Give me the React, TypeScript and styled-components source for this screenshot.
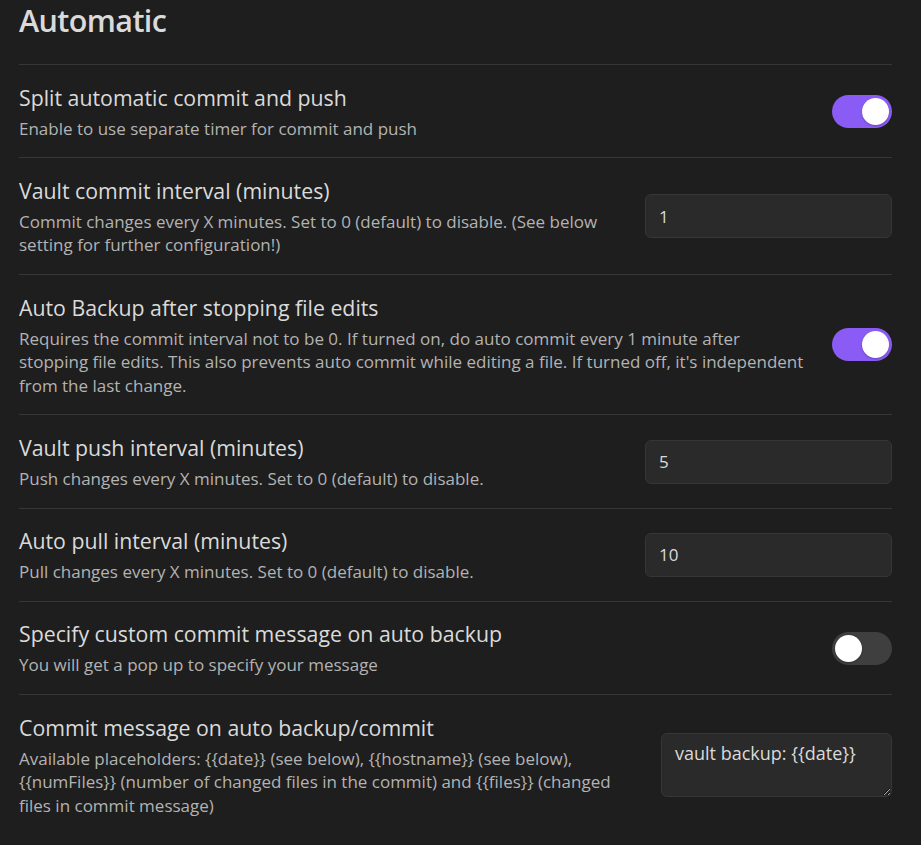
import * as React from 'react';
import styled, { createGlobalStyle } from 'styled-components';

const GlobalStyle = createGlobalStyle`
    html, body {
        margin: 0;
        padding: 0;
        background: #1e1e1e;
    }
    body {
        font-family: 'Open Sans', 'Liberation Sans', sans-serif;
        color: #dadada;
    }
`;

const colors = {
    bg: '#1e1e1e',
    text: '#dadada',
    muted: '#b3b3b3',
    border: '#363636',
    accent: '#8a5cf5',
    inputBg: '#2a2a2a',
    inputBorder: '#363636',
    toggleOff: '#3f3f3f',
};

const Page = styled.div`
    padding: 0 29px 0 19px;
    width: 873px;
    background: ${colors.bg};
    min-height: 845px;
`;

const Heading = styled.h2`
    margin: 0;
    padding: 0 0 24px;
    font-size: 30.5px;
    line-height: 40px;
    font-weight: 600;
    letter-spacing: -0.6px;
    color: ${colors.text};
    border-bottom: 1px solid ${colors.border};
`;

const Row = styled.div`
    display: flex;
    align-items: center;
    padding: 17.5px 0 17.25px;
    border-bottom: 1px solid ${colors.border};

    &:last-child {
        border-bottom: none;
    }
`;

const Info = styled.div`
    flex: 1 1 auto;
    margin-right: 20px;
`;

const Name = styled.div`
    font-size: 21.3px;
    line-height: 30px;
    color: ${colors.text};
`;

const Description = styled.div`
    margin-top: 4px;
    font-size: 17px;
    line-height: 23.5px;
    color: ${colors.muted};
`;

const Control = styled.div`
    flex: 0 0 auto;
    margin-left: auto;
    display: flex;
    justify-content: flex-end;
`;

const Toggle = styled.div<{ $on: boolean }>`
    width: 60px;
    height: 33px;
    border-radius: 17px;
    background: ${(p) => (p.$on ? colors.accent : colors.toggleOff)};
    display: flex;
    align-items: center;
    justify-content: ${(p) => (p.$on ? 'flex-end' : 'flex-start')};
    padding: 0 3px;
    box-sizing: border-box;
    cursor: pointer;
`;

const Knob = styled.span`
    width: 27px;
    height: 27px;
    border-radius: 50%;
    background: #ffffff;
    box-shadow: 0 1px 2px rgba(0, 0, 0, 0.25);
`;

const TextInput = styled.input`
    width: 247px;
    height: 44px;
    box-sizing: border-box;
    padding: 0 13px;
    background: ${colors.inputBg};
    border: 1px solid ${colors.inputBorder};
    border-radius: 6px;
    color: ${colors.text};
    font-family: inherit;
    font-size: 17px;
    outline: none;
`;

const TextArea = styled.textarea`
    width: 231px;
    height: 64px;
    box-sizing: border-box;
    padding: 7px 13px;
    background: ${colors.inputBg};
    border: 1px solid ${colors.inputBorder};
    border-radius: 6px;
    color: ${colors.text};
    font-family: inherit;
    font-size: 18px;
    line-height: 24px;
    outline: none;
    resize: both;
`;

type Setting = {
    name: string;
    desc: string;
    kind: 'toggle' | 'input' | 'textarea';
    on?: boolean;
    value?: string;
};

const settings: Setting[] = [
    {
        name: 'Split automatic commit and push',
        desc: 'Enable to use separate timer for commit and push',
        kind: 'toggle',
        on: true,
    },
    {
        name: 'Vault commit interval (minutes)',
        desc: 'Commit changes every X minutes. Set to 0 (default) to disable. (See below setting for further configuration!)',
        kind: 'input',
        value: '1',
    },
    {
        name: 'Auto Backup after stopping file edits',
        desc: "Requires the commit interval not to be 0. If turned on, do auto commit every 1 minute after stopping file edits. This also prevents auto commit while editing a file. If turned off, it's independent from the last change.",
        kind: 'toggle',
        on: true,
    },
    {
        name: 'Vault push interval (minutes)',
        desc: 'Push changes every X minutes. Set to 0 (default) to disable.',
        kind: 'input',
        value: '5',
    },
    {
        name: 'Auto pull interval (minutes)',
        desc: 'Pull changes every X minutes. Set to 0 (default) to disable.',
        kind: 'input',
        value: '10',
    },
    {
        name: 'Specify custom commit message on auto backup',
        desc: 'You will get a pop up to specify your message',
        kind: 'toggle',
        on: false,
    },
    {
        name: 'Commit message on auto backup/commit',
        desc: 'Available placeholders: {{date}} (see below), {{hostname}} (see below), {{numFiles}} (number of changed files in the commit) and {{files}} (changed files in commit message)',
        kind: 'textarea',
        value: 'vault backup: {{date}}',
    },
];

const SettingControl = ({ s }: { s: Setting }) => {
    if (s.kind === 'toggle') {
        return (
            <Toggle $on={!!s.on}>
                <Knob />
            </Toggle>
        );
    }
    if (s.kind === 'textarea') {
        return <TextArea defaultValue={s.value} spellCheck={false} />;
    }
    return <TextInput type="text" defaultValue={s.value} />;
};

const App = () => (
    <Page>
        <GlobalStyle />
        <Heading>Automatic</Heading>
        {settings.map((s) => (
            <Row key={s.name}>
                <Info>
                    <Name>{s.name}</Name>
                    <Description>{s.desc}</Description>
                </Info>
                <Control>
                    <SettingControl s={s} />
                </Control>
            </Row>
        ))}
    </Page>
);

export default App;
